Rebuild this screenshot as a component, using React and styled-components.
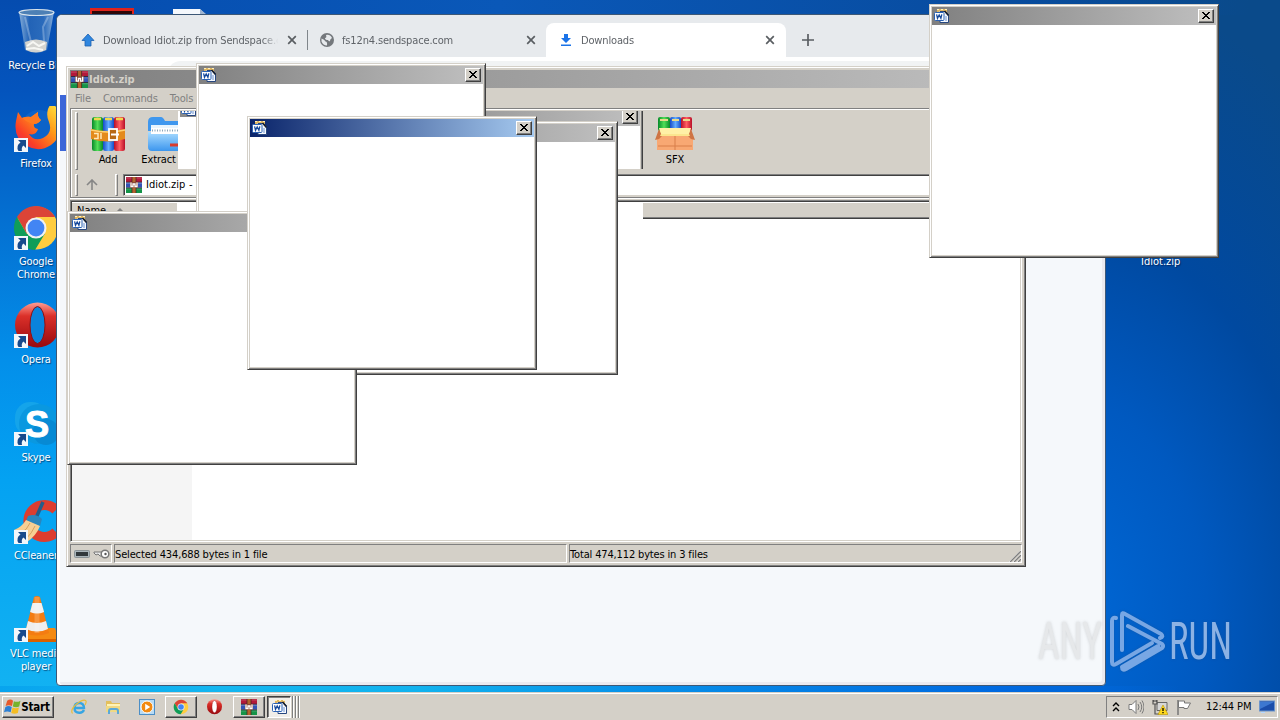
import React from 'react'
import styled, { createGlobalStyle, css } from 'styled-components'

const theme = {
  face: '#d4d0c8',
  light: '#ffffff',
  shadow: '#808080',
  dark: '#404040',
  tabText: '#5f6368',
  font: '"DejaVu Sans Condensed", "DejaVu Sans", sans-serif',
}

const GlobalStyle = createGlobalStyle`
  * { box-sizing: border-box; }
  body {
    margin: 0;
    font-family: ${theme.font};
    font-stretch: condensed;
    font-size: 11px;
    letter-spacing: -0.15px;
    color: #000;
    overflow: hidden;
  }
  svg { display: block; flex: none; }
`

const raised = css`
  border: 1px solid;
  border-color: ${theme.light} ${theme.dark} ${theme.dark} ${theme.light};
  box-shadow: inset -1px -1px 0 ${theme.shadow};
`

const sunken = css`
  border: 1px solid;
  border-color: ${theme.shadow} ${theme.light} ${theme.light} ${theme.shadow};
`

const Desktop = styled.div`
  position: relative;
  width: 1280px;
  height: 720px;
  overflow: hidden;
  display: flex;
  flex-direction: column;
  background:
    linear-gradient(90deg, #08a4ee 0, #14b6f0 220px, #12b2ee 420px, #078fe8 650px, #0069e0 1000px, rgba(0, 98, 210, 0) 1180px) 0 686px / 1280px 8px no-repeat,
    linear-gradient(180deg, #054caf 0, #0454bd 90px, #0472d3 230px, #038fea 360px, #04a2f2 480px, #12b2f2 690px) 0 0 / 60px 692px no-repeat,
    linear-gradient(90deg, #054caf 0, #0a58b8 500px, #084c9f 1000px, rgba(8, 72, 146, 0) 1250px) 0 0 / 1280px 15px no-repeat,
    radial-gradient(420px 640px at 1060px 620px, #0069d8 0, #0059c0 35%, #0049a0 62%, #0a4a8a 100%);
`

const IconColumn = styled.div`
  display: flex;
  flex-direction: column;
  flex: 1;
  min-height: 0;
  width: 72px;
  padding-top: 8px;
`

const Shortcut = styled.div`
  position: relative;
  height: 98px;
  flex: none;
  display: flex;
  flex-direction: column;
  align-items: center;
  color: #fff;
  text-align: center;
  line-height: 13px;

  span {
    margin-top: 3px;
    white-space: pre;
    text-shadow: 1px 1px 1px rgba(0, 20, 60, 0.6);
  }
`

const Badge = styled.svg`
  position: absolute;
  left: 14px;
  top: 32px;
`

const Peek = styled.div`
  position: absolute;
  top: 8px;
  left: ${p => p.$x}px;
`

const DesktopLabel = styled.div`
  position: absolute;
  left: 1141px;
  top: 255px;
  color: #fff;
  letter-spacing: 0;
  line-height: 13px;
  text-shadow: 1px 1px 1px rgba(0, 20, 60, 0.6);
`

/* browser */

const Browser = styled.div`
  position: absolute;
  left: 56px;
  top: 14px;
  width: 1050px;
  height: 672px;
  display: flex;
  flex-direction: column;
  background: #f5f8fb;
  border: 1px solid #3d5876;
  border-radius: 6px 6px 4px 4px;
  box-shadow: inset 3px 0 0 #fff, inset -3px -3px 0 #ebeaef;
  overflow: hidden;
`

const TabStrip = styled.div`
  display: flex;
  align-items: flex-end;
  height: 42px;
  background: #e7eaed;
  color: ${theme.tabText};
`

const Tab = styled.div`
  display: flex;
  align-items: center;
  height: 34px;
  width: ${p => p.$w}px;
  padding: 0 ${p => (p.$active ? 11 : 10)}px 0 ${p => p.$pad || 12}px;
  gap: 7px;
  border-radius: 8px 8px 0 0;
  background: ${p => (p.$active ? '#fff' : 'transparent')};

  p {
    flex: 1;
    margin: 0;
    overflow: hidden;
    white-space: nowrap;
    mask-image: linear-gradient(90deg, #000 90%, transparent 99%);
  }
`

const TabDivider = styled.div`
  width: 1px;
  height: 20px;
  margin-bottom: 7px;
  background: #80868b;
`

const NewTab = styled.div`
  display: flex;
  align-items: center;
  height: 34px;
  padding-left: 16px;
`

const Omnibar = styled.div`
  height: 38px;
  flex: none;
  padding: 4px 0 0 110px;
  background: #fff;

  div { height: 28px; border-radius: 14px; background: #f1f3f4; }
`

const PageHeader = styled.div`
  height: 56px;
  flex: none;
  margin-left: 3px;
  background: #3c66d8;
`

/* classic windows */

const Frame = styled.div`
  position: absolute;
  left: ${p => p.$x}px;
  top: ${p => p.$y}px;
  width: ${p => p.$w || 290}px;
  height: ${p => p.$h || 254}px;
  padding: ${p => p.$pad || 1}px;
  display: flex;
  flex-direction: column;
  background: ${theme.face};
  border: 1px solid;
  border-color: ${theme.face} ${theme.dark} ${theme.dark} ${theme.face};
  box-shadow: inset 1px 1px 0 ${theme.light}, inset -1px -1px 0 ${theme.shadow};
`

const FrameInner = styled.div`
  flex: 1;
  margin: 1px;
  display: flex;
  flex-direction: column;
  min-height: 0;
`

const TitleBar = styled.div`
  display: flex;
  align-items: center;
  justify-content: space-between;
  height: 18px;
  flex: none;
  padding: 0 2px 0 1px;
  color: ${theme.face};
  font-weight: bold;
  background: ${p => (p.$active
    ? 'linear-gradient(90deg, #0a246a, #a6caf0)'
    : 'linear-gradient(90deg, #808080, #c0c0c0)')};
`

const TitleText = styled.div`
  display: flex;
  align-items: center;
  gap: 1px;
  letter-spacing: 0;
`

const CloseButton = styled.div`
  ${raised}
  width: 16px;
  height: 14px;
  display: flex;
  align-items: center;
  justify-content: center;
  padding: 0 1px 1px 0;
  background: ${theme.face};
`

const Blank = styled.div`
  flex: 1;
  background: #fff;
`

const MenuBar = styled.div`
  display: flex;
  align-items: center;
  gap: 12px;
  height: 20px;
  flex: none;
  padding-left: 5px;
  color: #808080;
`

const Rebar = styled.div`
  position: relative;
  height: 90px;
  flex: none;
  display: flex;
  flex-direction: column;
  border: 1px solid;
  border-color: ${theme.shadow} ${theme.light} ${theme.shadow} ${theme.shadow};
  box-shadow: inset 1px 1px 0 ${theme.light}, 0 1px 0 ${theme.light};
`

const Grip = styled.div`
  width: 3px;
  height: ${p => p.$h}px;
  border: 1px solid;
  border-color: ${theme.light} ${theme.shadow} ${theme.shadow} ${theme.light};
  flex: none;
`

const Toolbar = styled.div`
  display: flex;
  height: 64px;
  padding: 3px 0 0 4px;
`

const ToolButton = styled.div`
  display: flex;
  flex: none;
  flex-direction: column;
  align-items: center;
  gap: 1px;
  width: ${p => p.$w}px;
  padding-top: 4px;
  margin-left: ${p => p.$gap || 0}px;
  line-height: 14px;
  white-space: nowrap;
`

const AddressBar = styled.div`
  display: flex;
  align-items: center;
  height: 23px;
  padding-left: 4px;
`

const UpArrow = styled.div`
  width: 37px;
  display: flex;
  justify-content: center;
  padding-right: 10px;
`

const Combo = styled.div`
  flex: 1;
  display: flex;
  align-items: center;
  gap: 4px;
  height: 22px;
  margin-left: 5px;
  padding-left: 2px;
  letter-spacing: 0;
  word-spacing: 0.5px;
  background: #fff;
  border: 1px solid;
  border-color: ${theme.shadow} ${theme.face} ${theme.face} ${theme.shadow};
  box-shadow: inset 1px 1px 0 ${theme.dark};
`

/* leftovers of dragged windows which the toolbar has not repainted */
const GhostLeft = styled.div`
  position: absolute;
  left: 107px;
  top: 2px;
  width: 32px;
  height: 58px;
  padding-left: 2px;
  background: #fff;
  overflow: hidden;
`

const GhostStrip = styled.div`
  height: 6px;
  overflow: hidden;
  background: #8a8a8a;

  svg { margin-top: -10px; }
`

const GhostRight = styled.div`
  position: absolute;
  left: 282px;
  top: 2px;
  width: 290px;
  height: 58px;
  overflow: hidden;
  background: #fff;
  border-right: 1px solid ${theme.dark};
  box-shadow: inset -1px 0 0 ${theme.shadow}, inset -2px 0 0 ${theme.face};

  > div { margin: -3px 2px 0 3px; }
`

const FileList = styled.div`
  flex: 1;
  margin-top: 2px;
  min-height: 0;
  display: flex;
  flex-direction: column;
  background: linear-gradient(90deg, #f5f5f5 121px, #fff 121px);
  border: 1px solid;
  border-color: ${theme.shadow} ${theme.light} ${theme.light} ${theme.shadow};
  box-shadow: inset 1px 1px 0 ${theme.dark}, inset -1px -1px 0 ${theme.face};
`

const ListHeader = styled.div`
  display: flex;
  height: 17px;
  margin: 1px 1px 0;
`

const HeaderCell = styled.div`
  display: flex;
  align-items: center;
  gap: 10px;
  width: ${p => (p.$w ? `${p.$w}px` : 'auto')};
  flex: ${p => (p.$w ? 'none' : 1)};
  padding-left: 5px;
  letter-spacing: 0;
  background: ${p => (p.$blank ? '#fff' : theme.face)};
  ${p => !p.$blank && `
    border-bottom: 1px solid ${theme.dark};
    box-shadow: inset 0 -1px 0 ${theme.shadow}, inset 0 1px 0 ${theme.light};
  `}
`

const StatusBar = styled.div`
  display: flex;
  gap: 2px;
  height: 21px;
  flex: none;
  padding-top: 2px;
`

const StatusPane = styled.div`
  ${sunken}
  width: ${p => (p.$w ? `${p.$w}px` : 'auto')};
  flex: ${p => (p.$w ? 'none' : 1)};
  display: flex;
  align-items: center;
  gap: 3px;
  padding: 1px 0 0 ${p => p.$pad || 0}px;
  white-space: nowrap;
`

const SizeGrip = styled.svg`
  margin-left: auto;
  align-self: flex-end;
`

/* taskbar */

const Taskbar = styled.div`
  position: relative;
  display: flex;
  flex: none;
  align-items: center;
  height: 28px;
  padding: 0 2px;
  background: ${theme.face};
  border-top: 1px solid ${theme.face};
  box-shadow: inset 0 1px 0 ${theme.light};
`

const TaskButton = styled.div`
  ${raised}
  display: flex;
  align-items: center;
  justify-content: center;
  width: ${p => p.$w}px;
  height: 22px;
  margin-right: ${p => p.$mr || 0}px;
  padding-right: ${p => p.$pr || 0}px;
  font-weight: bold;
  font-size: 11.5px;
  background: ${theme.face};
  ${p => p.$pressed && css`
    border-color: ${theme.dark} ${theme.light} ${theme.light} ${theme.dark};
    box-shadow: inset 1px 1px 0 ${theme.shadow};
    background: #f0eee9;
  `}
`

const QuickLaunch = styled.div`
  display: flex;
  gap: 18px;
  padding: 0 10px 0 17px;
`

const OperaSlot = styled.div`
  width: 36px;
  padding-right: 3px;
  display: flex;
  justify-content: center;
`

const StackEdge = styled.div`
  width: 1px;
  height: 22px;
  margin-left: 2px;
  background: #fff;
  box-shadow: -1px 0 0 ${theme.shadow};
`

const Tray = styled.div`
  ${sunken}
  display: flex;
  align-items: center;
  gap: 8px;
  width: 172px;
  height: 22px;
  margin-left: auto;
  padding: 0 1px 0 5px;

  span { margin-left: 6px; white-space: nowrap; letter-spacing: -0.1px; }
`

const Watermark = styled.svg`
  position: absolute;
  left: 1030px;
  top: 604px;
  overflow: visible;
  filter: drop-shadow(0 0 1.5px rgba(60, 60, 60, 0.2));
`

const CloseGlyph = () => (
  <svg width="8" height="7" viewBox="0 0 8 7" shapeRendering="crispEdges">
    <path d="M0 0h2v1h1v1h2v-1h1v-1h2v1h-1v1h-1v1h-1v1h1v1h1v1h1v1h-2v-1h-1v-1h-2v1h-1v1h-2v-1h1v-1h1v-1h1v-1h-1v-1h-1v-1h-1z" />
  </svg>
)

const TabClose = () => (
  <svg width="10" height="10" viewBox="0 0 10 10">
    <path d="M1.2 1.2l7.6 7.6M8.8 1.2L1.2 8.8" stroke="#5a5e62" strokeWidth="1.7" />
  </svg>
)

const WordIcon = () => (
  <svg width="17" height="16" viewBox="0 0 17 16">
    <path d="M4 1h10v3H4z" fill="#dfb662" />
    <path d="M4 1h2v1H4zM8 1h2v1H8zM12 1h2v1h-2zM6 3h2v1H6zM10 3h2v1h-2z" fill="#fff0bf" />
    <path d="M7 3.500h5.500l3 3.500v7.500H7z" fill="#f6f9ff" stroke="#27477f" />
    <path d="M11.500 3l4 4.500" stroke="#151d2c" strokeWidth="1.600" />
    <path d="M13 8v5" stroke="#6d94d0" strokeWidth="1" />
    <rect x="1.500" y="4.500" width="9.500" height="8" rx="1" fill="#fff" stroke="#2a62b4" />
    <path d="M3.600 6.300l.9 4L6.200 7l1.700 3.300.9-4" fill="none" stroke="#174a9c" strokeWidth="1.300" />
  </svg>
)

const RarIcon = ({ size = 16 }) => (
  <svg width={size} height={size} viewBox="0 0 16 16">
    <rect width="16" height="5" fill="#b3193a" />
    <rect y="5.5" width="16" height="5" fill="#3453b4" />
    <rect y="11" width="16" height="5" fill="#159447" />
    <path d="M0 1h16M0 6.5h16M0 12h16" stroke="#fff" strokeOpacity=".3" strokeWidth=".7" />
    <path d="M0 5.2h16M0 10.8h16" stroke="#251f35" strokeWidth=".8" />
    <path d="M6 0h4v16H6z" fill="#b4642d" />
    <path d="M6 0v16M10 0v16" stroke="#40201c" strokeWidth=".7" />
    <rect x="4" y="5" width="8" height="5.500" fill="#8a4a38" />
    <path d="M5 5.500v4h2v-2.500h2v2.500h2v-4" fill="none" stroke="#fff" strokeWidth="1.300" />
  </svg>
)

const ArchiveIcon = () => (
  <svg width="36" height="36" viewBox="0 0 36 36">
    <defs>
      {[['ag', '#078a29', '#52df58'], ['ab', '#164cc7', '#62adff'], ['ar', '#b90f28', '#ff5e62']].map(([id, a, b]) => (
        <linearGradient id={id} key={id}>
          <stop stopColor={a} /><stop offset=".5" stopColor={b} /><stop offset="1" stopColor={a} />
        </linearGradient>
      ))}
    </defs>
    <rect x="2" y="1" width="11" height="34" rx="2.5" fill="url(#ag)" />
    <rect x="13" y="1" width="11" height="34" rx="2.5" fill="url(#ab)" />
    <rect x="24" y="1" width="11" height="34" rx="2.5" fill="url(#ar)" />
    <path d="M4 3h7M15 3h7M26 3h7" stroke="#f0d84e" strokeWidth="2.4" />
    <path d="M1 13q17 4 34 0v10q-17 5-34 0z" fill="#e48a1c" />
    <path d="M1 14q17 4 34 0" fill="none" stroke="#ffd071" strokeWidth="1.4" />
    <path d="M4 17.500h4v5H4M11 17v6" stroke="#ffe9b8" strokeWidth="1.5" fill="none" />
    <rect x="19" y="13" width="8" height="11" fill="#b86915" stroke="#fff" strokeWidth="1.8" />
    <path d="M21 18.500h8" stroke="#fff" strokeWidth="2" />
  </svg>
)

const FolderIcon = () => (
  <svg width="38" height="36" viewBox="0 0 38 36">
    <defs>
      <linearGradient id="fd" x2="0" y2="1">
        <stop stopColor="#a9dcff" /><stop offset="1" stopColor="#3c96ee" />
      </linearGradient>
    </defs>
    <path d="M2 6q0-5 5-5h8q2 0 4 4h17v10H2z" fill="#3f97ee" />
    <path d="M5 9h32v9H5z" fill="#e8f4fd" />
    <path d="M2 16h36v15q0 4-4 4H6q-4 0-4-4z" fill="url(#fd)" />
    <path d="M5 15h32" stroke="#fff" strokeWidth="6" />
    <path d="M6 14.500h30" stroke="#8ba6b8" strokeWidth="2" strokeDasharray="1 1.500" />
    <path d="M24 29h8" stroke="#dc3b2d" strokeWidth="3" />
  </svg>
)

const BoxIcon = () => (
  <svg width="40" height="36" viewBox="0 0 40 36">
    <rect x="3" y="1" width="12" height="14" rx="2" fill="url(#ag)" />
    <rect x="15" y="1" width="11" height="14" rx="2" fill="url(#ab)" />
    <rect x="26" y="1" width="11" height="14" rx="2" fill="url(#ar)" />
    <path d="M5 4h8M17 4h7M28 4h7" stroke="#e8d98b" strokeWidth="2" />
    <path d="M4 12h32l-2 9H6z" fill="#fff0a6" />
    <path d="M2 20h36v14H2z" fill="#f8a873" />
    <path d="M4 13L0 24l4-1 3-3zM36 13l4 11-4-1-3-3z" fill="#cf7444" />
    <path d="M5 20h30l-1-2H6z" fill="#fbe58e" />
    <path d="M20 20v14M3 30h34" stroke="#d87f4a" strokeWidth="1" />
  </svg>
)

const ChromeLogo = ({ size }) => (
  <svg width={size} height={size} viewBox="0 0 48 48">
    <circle cx="24.500" cy="24" r="21.500" fill="#ffcd40" />
    <path d="M24 13h19.1A22 22 0 0 0 5 13l9.500 16.500z" fill="#db4437" />
    <path d="M4.950 13A22 22 0 0 0 23 46l10-16.500-9 4.500-9.500-4.500z" fill="#0f9d58" />
    <circle cx="24" cy="24" r="10.500" fill="#f1f1f1" />
    <circle cx="24" cy="24" r="8.400" fill="#4285f4" />
  </svg>
)

const OperaLogo = ({ size, hole }) => (
  <svg width={size} height={size} viewBox="0 0 48 48">
    <defs>
      <linearGradient id={`op${size}`} x2="0" y2="1">
        <stop stopColor="#ff9c92" /><stop offset=".3" stopColor="#db3029" /><stop offset="1" stopColor="#98090e" />
      </linearGradient>
    </defs>
    <ellipse cx="25.500" cy="23" rx="22.500" ry="22.500" fill={`url(#op${size})`} />
    <ellipse cx="25.500" cy="23" rx="7.500" ry="18.500" fill={hole} stroke="#8c1014" />
  </svg>
)

const BinIcon = () => (
  <svg width="48" height="48" viewBox="0 0 48 48">
    <defs>
      <linearGradient id="bin">
        <stop stopColor="#a9c8e4" stopOpacity=".8" /><stop offset=".3" stopColor="#2f6cb8" stopOpacity=".7" />
        <stop offset=".7" stopColor="#3b78c0" stopOpacity=".7" /><stop offset="1" stopColor="#a5c5e4" stopOpacity=".8" />
      </linearGradient>
    </defs>
    <path d="M7 4l6 38q11 6 22 0l7-38z" fill="url(#bin)" />
    <path d="M13 34q11-5 22 0l-1 8q-10 5-20 0z" fill="#d3d3cf" />
    <path d="M15 38l6-4 6 4 6-3M14 41l8-1 9 2" stroke="#f7f7f3" fill="none" strokeWidth="2" />
    <path d="M13 9l6 25M36 9l-5 10 1 14" stroke="#e8f3fb" strokeOpacity=".3" strokeWidth="2" fill="none" />
    <ellipse cx="24.500" cy="4.500" rx="17.500" ry="3" fill="#4d80b5" stroke="#d9e4ec" strokeWidth="1.2" />
  </svg>
)

const FirefoxIcon = () => (
  <svg width="48" height="48" viewBox="0 0 48 48">
    <defs>
      <linearGradient id="ff" x1="1" x2="0" y2="1">
        <stop stopColor="#fff044" /><stop offset=".4" stopColor="#ff9b17" />
        <stop offset=".75" stopColor="#fa3e27" /><stop offset="1" stopColor="#db2268" />
      </linearGradient>
    </defs>
    <circle cx="27" cy="22" r="18" fill="#0c63c8" />
    <path d="M6 6l4 6q5-2 9-1l7-5q-1 5 3 8-3 4-7 4-1 4 4 5-2 7-9 5 5 8 14 4 10-5 6-16-3-6-1-13 2-5 5-6 7 8 8 20 0 15-10 22-12 8-24 1Q1 32 4 15z" fill="url(#ff)" />
    <path d="M10 12q5-2 9-1l7-5q-1 5 3 8-3 4-7 4-6-1-12-6z" fill="#ff7a20" />
  </svg>
)

const SkypeIcon = () => (
  <svg width="48" height="48" viewBox="0 0 48 48">
    <rect x="3" y="2" width="32" height="34" rx="15" fill="#14a4ea" />
    <circle cx="27" cy="24" r="20" fill="#0a98e0" />
    <circle cx="34" cy="32" r="13" fill="#078ad4" />
    <text x="13" y="37" fontFamily="Liberation Sans, sans-serif" fontSize="37" fontWeight="bold" fill="#fff" stroke="#fff" textLength="24" lengthAdjust="spacingAndGlyphs">S</text>
  </svg>
)

const CleanerIcon = () => (
  <svg width="48" height="48" viewBox="0 0 48 48">
    <path d="M44 12A16 16 0 1 0 44 34" fill="none" stroke="#dd3d2f" strokeWidth="10" />
    <path d="M31 4L24 20" stroke="#245d8a" strokeWidth="3.500" />
    <path d="M16 18q8-3 14 3l-2 7-14-5z" fill="#2b86bd" />
    <path d="M14 22l14 6q-4 10-13 16Q7 39 2 32q8-3 12-10z" fill="#f7cf94" />
    <path d="M18 25q-3 7-9 10M23 28q-3 7-9 13" stroke="#d7a260" fill="none" />
  </svg>
)

const ConeIcon = () => (
  <svg width="48" height="48" viewBox="0 0 48 48">
    <path d="M10 32h33l5 13H12z" fill="#f58a12" />
    <path d="M12 43h36v3H12z" fill="#d96100" />
    <path d="M22 1q3-2 6 0l9 36q-12 5-24 0z" fill="#f47c11" />
    <path d="M20.500 7h9l2.600 9q-7 3-14 0z" fill="#f1f1f1" />
    <path d="M16 25q9 4 18 0l2 8q-11 5-22 0z" fill="#eee" />
    <path d="M25 1v36" stroke="#fff" strokeOpacity=".2" strokeWidth="5" />
  </svg>
)

const WindowsFlag = () => (
  <svg width="17" height="17" viewBox="0 0 16 16">
    <path d="M3 2.500q3-2 5.500 0L7.500 7.500Q4.500 6 1.500 7.500z" fill="#e65a2c" />
    <path d="M9.300 3q3 1.500 6.200-.5L14.300 8q-3 1.500-6 0z" fill="#76b32c" />
    <path d="M1.300 8.500q3-1.800 6 0l-1 5Q3 12 0 13.500z" fill="#2c80d4" />
    <path d="M8 9q3 1.500 6 0l-1 5q-3 1.500-6.200 0z" fill="#f4bd23" />
  </svg>
)

const ExplorerE = () => (
  <svg width="16" height="16" viewBox="0 0 16 16">
    <path d="M3.500 9h9.500Q13 4 8.300 4 3.500 4 3.500 9q0 5 5 4.800Q11.500 14 13 11" fill="none" stroke="#36a5e3" strokeWidth="2.400" />
    <path d="M1.500 14.500Q-1 11 5 5.500 12 0 14.500 1.500 16 2.500 14 6" fill="none" stroke="#e9bd3a" strokeWidth="1.200" />
  </svg>
)

const FolderSmall = () => (
  <svg width="16" height="16" viewBox="0 0 16 16">
    <path d="M1 2h5l1 2h8v9H1z" fill="#e3bf5c" />
    <path d="M2 5h13v3H2z" fill="#fff3b5" />
    <path d="M1 7h14v6H1z" fill="#f0d983" />
    <path d="M4 15v-3q0-2 2-2h5q2 0 2 2v3" fill="none" stroke="#5ba9d7" strokeWidth="2" />
  </svg>
)

const MediaIcon = () => (
  <svg width="16" height="16" viewBox="0 0 16 16">
    <rect x=".5" y=".5" width="15" height="15" fill="#b7dbf5" stroke="#4b8ec6" />
    <circle cx="8" cy="8" r="6" fill="#f28a12" stroke="#fff" />
    <path d="M6.200 4.800v6.400L11.200 8z" fill="#fff" />
  </svg>
)

const ShortcutBadge = () => (
  <Badge width="14" height="14" viewBox="0 0 14 14">
    <rect width="14" height="14" fill="#f2f6fa" />
    <path d="M4 2h8v8l-2.500-2.500Q7 9.500 8 13H4.500Q1.500 8 6.500 4.500z" fill="#174a8c" />
  </Badge>
)

const shortcuts = [
  { label: 'Recycle Bin', icon: <BinIcon /> },
  { label: 'Firefox', icon: <FirefoxIcon />, link: true },
  { label: 'Google\nChrome', icon: <ChromeLogo size={48} />, link: true },
  { label: 'Opera', icon: <OperaLogo size={48} hole="#0a83dc" />, link: true },
  { label: 'Skype', icon: <SkypeIcon />, link: true },
  { label: 'CCleaner', icon: <CleanerIcon />, link: true },
  { label: 'VLC media\nplayer', icon: <ConeIcon />, link: true },
]

const popups = [
  { x: 196, y: 63 },
  { x: 328, y: 121 },
  { x: 67, y: 211 },
  { x: 247, y: 116, active: true },
  { x: 929, y: 4 },
]

const PopupTitle = ({ active }) => (
  <TitleBar $active={active}>
    <WordIcon />
    <CloseButton><CloseGlyph /></CloseButton>
  </TitleBar>
)

function BrowserWindow() {
  return (
    <Browser>
      <TabStrip>
        <Tab $w={250} $pad={23}>
          <svg width="16" height="16" viewBox="0 0 16 16">
            <path d="M8 2l6 6.500h-3V14H5V8.500H2z" fill="#2f86df" stroke="#1c5fae" strokeWidth=".8" />
          </svg>
          <p>Download Idiot.zip from Sendspace.com</p>
          <TabClose />
        </Tab>
        <TabDivider />
        <Tab $w={238} $pad={11}>
          <svg width="16" height="16" viewBox="0 0 16 16">
            <circle cx="8" cy="8" r="7" fill="#74787c" />
            <path d="M2.500 6.500q3 1 4 3 2 0 1.500 4-4 0-5.500-4zM7 3q4-1 6 3-2 1-2 3-1 1-2-1-3 0-3-2 2 0 1-3z" fill="#e7eaed" />
          </svg>
          <p>fs12n4.sendspace.com</p>
          <TabClose />
        </Tab>
        <Tab $w={240} $active>
          <svg width="16" height="16" viewBox="0 0 16 16">
            <path d="M6 2h4v4h3L8 11 3 6h3zM3 12.500h10V14H3z" fill="#1a73e8" />
          </svg>
          <p>Downloads</p>
          <TabClose />
        </Tab>
        <NewTab>
          <svg width="12" height="12" viewBox="0 0 12 12">
            <path d="M6 0v12M0 6h12" stroke="#5a5e62" strokeWidth="1.700" />
          </svg>
        </NewTab>
      </TabStrip>
      <Omnibar><div /></Omnibar>
      <PageHeader />
    </Browser>
  )
}

function ArchiveWindow() {
  return (
    <Frame $x={66} $y={66} $w={960} $h={501} $pad={2}>
      <FrameInner>
        <TitleBar>
          <TitleText><RarIcon size={17} />Idiot.zip</TitleText>
        </TitleBar>
        <MenuBar><span>File</span><span>Commands</span><span>Tools</span></MenuBar>
        <Rebar>
          <Toolbar>
            <Grip $h={58} />
            <ToolButton $w={60}><ArchiveIcon />Add</ToolButton>
            <ToolButton $w={54}><FolderIcon />Extract To</ToolButton>
            <ToolButton $w={60} $gap={453}><BoxIcon />SFX</ToolButton>
          </Toolbar>
          <AddressBar>
            <Grip $h={22} />
            <UpArrow>
              <svg width="12" height="11" viewBox="0 0 12 11">
                <path d="M6 11V1.500M1 6l5-5 5 5" fill="none" stroke="#868686" strokeWidth="1.600" />
              </svg>
            </UpArrow>
            <Grip $h={22} />
            <Combo><RarIcon />Idiot.zip - ZIP archive</Combo>
          </AddressBar>
          <GhostLeft><GhostStrip><WordIcon /></GhostStrip></GhostLeft>
          <GhostRight><PopupTitle /></GhostRight>
        </Rebar>
        <FileList>
          <ListHeader>
            <HeaderCell $w={105}>
              Name
              <svg width="8" height="4" viewBox="0 0 8 4"><path d="M4 0l4 4H0z" fill="#808080" /></svg>
            </HeaderCell>
            <HeaderCell $w={466} $blank />
            <HeaderCell />
          </ListHeader>
        </FileList>
        <StatusBar>
          <StatusPane $w={42} $pad={3}>
            <svg width="16" height="8" viewBox="0 0 16 8">
              <rect x=".5" y=".5" width="15" height="7" rx="1" fill="#a9b5bb" stroke="#8a9296" />
              <rect x="2" y="2" width="12" height="4" fill="#31383c" />
            </svg>
            <svg width="17" height="10" viewBox="0 0 17 10">
              <path d="M1 3h8l1 4H7L5 5 3 6 1 4z" fill="#e8e8e8" stroke="#777" />
              <circle cx="12" cy="5" r="3.800" fill="#fff" stroke="#777" strokeWidth="1.500" />
              <circle cx="12.500" cy="5" r="1.200" fill="#555" />
            </svg>
          </StatusPane>
          <StatusPane $w={453}>Selected 434,688 bytes in 1 file</StatusPane>
          <StatusPane>
            Total 474,112 bytes in 3 files
            <SizeGrip width="13" height="13" viewBox="0 0 13 13">
              <path d="M1 13L13 1M5 13l8-8M9 13l4-4" stroke="#fff" />
              <path d="M2 13L13 2M6 13l7-7M10 13l3-3" stroke="#808080" strokeWidth="1.400" />
            </SizeGrip>
          </StatusPane>
        </StatusBar>
      </FrameInner>
    </Frame>
  )
}

function SystemTray() {
  return (
    <Tray>
      <svg width="8" height="10" viewBox="0 0 8 10">
        <path d="M1 4l3-3 3 3M1 9l3-3 3 3" fill="none" stroke="#000" strokeWidth="1.400" />
      </svg>
      <svg width="16" height="16" viewBox="0 0 16 16">
        <path d="M1 5.500h3l4-4v13l-4-4H1z" fill="#fff" stroke="#7a7a7a" />
        <path d="M10 5q2 3 0 6M12 3q3.500 5 0 10M14 1.500q4 6.500 0 13" fill="none" stroke="#7a7a7a" />
      </svg>
      <svg width="16" height="16" viewBox="0 0 16 16">
        <path d="M5 3.500h10v8H5z" fill="#d7d7d7" stroke="#666" />
        <path d="M1 1v4h4V1M3 5v10h4M2 1v2M4 1v2" fill="none" stroke="#555" strokeWidth="1.200" />
        <path d="M11 6l5 9.500H6z" fill="#ffd91c" stroke="#b99300" strokeWidth=".6" />
        <path d="M11 9v3M11 13v1.300" stroke="#000" strokeWidth="1.300" />
      </svg>
      <svg width="16" height="16" viewBox="0 0 16 16">
        <path d="M2 1v15" stroke="#777" strokeWidth="1.500" />
        <path d="M2.500 2h6v2h6l-3 5.500H8v-1H2.500z" fill="#fff" stroke="#777" />
      </svg>
      <span>12:44 PM</span>
      <svg width="16" height="14" viewBox="0 0 16 14">
        <rect x=".5" y="1" width="15" height="10" fill="#1b4eaa" stroke="#6b94cc" />
        <path d="M1 2h14L1 9z" fill="#3d78d0" />
        <path d="M2 12.500h4" stroke="#b6d8ff" />
      </svg>
    </Tray>
  )
}

export default function App() {
  return (
    <Desktop>
      <GlobalStyle />
      <IconColumn>
        {shortcuts.map(s => (
          <Shortcut key={s.label}>
            {s.icon}
            {s.link && <ShortcutBadge />}
            <span>{s.label}</span>
          </Shortcut>
        ))}
      </IconColumn>
      <Peek $x={90}>
        <svg width="44" height="8" viewBox="0 0 44 8">
          <rect width="44" height="8" fill="#df231b" /><rect x="2" y="3" width="40" height="5" fill="#2c0708" />
        </svg>
      </Peek>
      <Peek $x={165}>
        <svg width="44" height="8" viewBox="0 0 44 8">
          <path d="M8 1h27l7 7H8z" fill="#f5f8fc" /><path d="M35 1v5h6z" fill="#9fb5d1" /><path d="M0 6h22v2H0z" fill="#6d9be0" />
        </svg>
      </Peek>
      <DesktopLabel>Idiot.zip</DesktopLabel>
      <BrowserWindow />
      <ArchiveWindow />
      {popups.map(p => (
        <Frame key={p.x} $x={p.x} $y={p.y}>
          <FrameInner>
            <PopupTitle active={p.active} />
            <Blank />
          </FrameInner>
        </Frame>
      ))}
      <Watermark width="210" height="72" viewBox="0 0 210 72">
        <g fontFamily="Roboto, sans-serif" fontSize="51" letterSpacing="0">
          <text x="8" y="55" fill="#e6e8ea" textLength="64" lengthAdjust="spacingAndGlyphs">ANY</text>
          <text x="139" y="55" fill="#8cb2e4" textLength="63" lengthAdjust="spacingAndGlyphs">RUN</text>
        </g>
        <g fill="none" stroke="#78a7e4" strokeWidth="4" strokeLinejoin="round" strokeLinecap="round">
          <path d="M92 46V11q0-3 3-1l36 20q3 3-1 4" />
          <path d="M86 14q-4-1-4 3v41q0 4 4 2l36-21" />
          <path d="M98 22l34 18q2 2 0 4L96 65q-4 2-4-2l36-21" />
        </g>
      </Watermark>
      <Taskbar>
        <TaskButton $w={52} $pr={2}><WindowsFlag />Start</TaskButton>
        <QuickLaunch><ExplorerE /><FolderSmall /><MediaIcon /></QuickLaunch>
        <TaskButton $w={32}><ChromeLogo size={16} /></TaskButton>
        <OperaSlot><OperaLogo size={16} hole="#fff" /></OperaSlot>
        <TaskButton $w={32} $mr={2}><RarIcon /></TaskButton>
        <TaskButton $w={24} $pressed><WordIcon /></TaskButton>
        <StackEdge /><StackEdge /><StackEdge />
        <SystemTray />
      </Taskbar>
    </Desktop>
  )
}
